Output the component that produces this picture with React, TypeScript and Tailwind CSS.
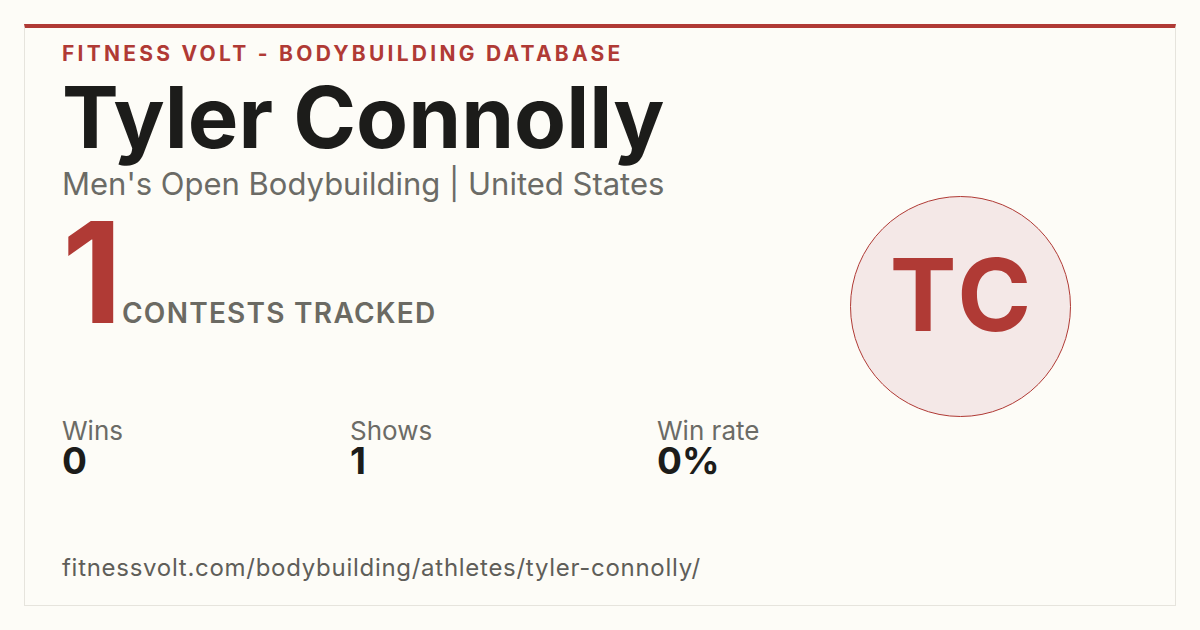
const stats = [
  { label: 'Wins', value: '0' },
  { label: 'Shows', value: '1' },
  { label: 'Win rate', value: '0%' },
];

export default function App() {
  return (
    <div className="w-[1200px] h-[630px] bg-[#fdfcf7] p-6 font-['Inter',sans-serif]">
      <div className="h-full border border-[#e6e4dd] border-t-4 border-t-[#b03a35] flex">
        {/* Left column */}
        <div className="flex-1 pl-[37px] pt-[12px] flex flex-col">
          <p className="text-[21px] leading-[28px] font-bold tracking-[0.155em] text-[#b03a35]">
            FITNESS VOLT - BODYBUILDING DATABASE
          </p>
          <h1 className="mt-[7px] mb-[5px] text-[85px] leading-[86px] font-bold text-[#1c1c1a]">
            Tyler Connolly
          </h1>
          <p className="text-[31px] leading-[36px] text-[#6b6b66]">
            Men's Open Bodybuilding | United States
          </p>
          <div className="flex items-baseline mt-[8px]">
            <span className="text-[140px] leading-[124px] font-bold text-[#b03a35] tracking-[-0.06em]">1</span>
            <span className="ml-[8px] text-[28px] leading-[28px] font-semibold tracking-[0.045em] text-[#6b6a63]">
              CONTESTS TRACKED
            </span>
          </div>
          <div className="mt-[84px] grid grid-cols-[288px_307px_auto]">
            {stats.map((s) => (
              <div key={s.label} className="flex flex-col">
                <span className="text-[26px] leading-[26px] text-[#6b6b66]">{s.label}</span>
                <span className="text-[37px] leading-[34px] font-bold text-[#1c1c1a]">{s.value}</span>
              </div>
            ))}
          </div>
          <p className="mt-auto mb-[22px] text-[24px] leading-[30px] text-[#5f5e59] tracking-[0.03em]">
            fitnessvolt.com/bodybuilding/athletes/tyler-connolly/
          </p>
        </div>
        {/* Avatar */}
        <div className="pr-[104px] pt-[168px]">
          <div className="w-[221px] h-[221px] rounded-full border-[1.5px] border-[#b03a35] bg-[#f4e8e7] flex items-center justify-center">
            <span className="text-[100px] leading-none font-bold text-[#b03a35] tracking-[0.04em] mt-[-24px] pl-[4px]">TC</span>
          </div>
        </div>
      </div>
    </div>
  );
}
